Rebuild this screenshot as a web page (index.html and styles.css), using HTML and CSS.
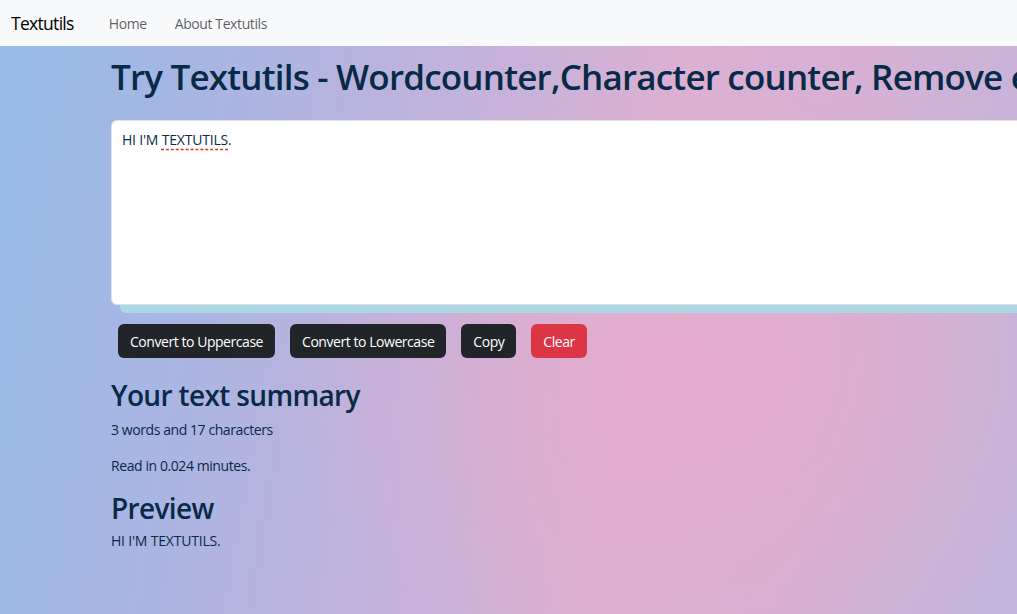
FILE: index.html
```html
<!DOCTYPE html>
<html lang="en">
<head>
<meta charset="utf-8">
<title>Textutils</title>
<link rel="stylesheet" href="styles.css">
</head>
<body>
<nav class="navbar">
  <span class="brand">Textutils</span>
  <a class="nav-link" href="#">Home</a>
  <a class="nav-link" href="#">About Textutils</a>
</nav>
<main class="container">
  <h1 class="title">Try Textutils - Wordcounter,Character counter, Remove extra spaces</h1>
  <div class="textbox">HI I'M <span class="misspelt">TEXTUTILS</span>.</div>
  <div class="actions">
    <button class="btn btn-dark">Convert to Uppercase</button>
    <button class="btn btn-dark">Convert to Lowercase</button>
    <button class="btn btn-dark">Copy</button>
    <button class="btn btn-red">Clear</button>
  </div>
  <h2 class="section">Your text summary</h2>
  <p class="line">3 words and 17 characters</p>
  <p class="line">Read in 0.024 minutes.</p>
  <h2 class="section preview-h">Preview</h2>
  <p class="line tight caps">HI I'M TEXTUTILS.</p>
</main>
</body>
</html>
```

FILE: styles.css
```css
html, body {
  margin: 0;
  padding: 0;
  overflow: hidden;
  height: 100%;
}
body {
  font-family: "Open Sans", "Noto Sans", sans-serif;
  font-size: 14px;
  letter-spacing: -0.42px;
  color: #082a47;
  background:
    radial-gradient(ellipse 420px 300px at 690px 370px, rgba(240, 168, 200, 0.55), rgba(240, 168, 200, 0) 100%),
    linear-gradient(100deg, #96bbe8 0%, #aab5e2 22%, #c5b2da 45%, #dbb0d2 62%, #d6b0d4 78%, #c1b5db 100%);
}
.navbar {
  height: 46px;
  background: #f8f9fa;
  display: flex;
  align-items: center;
  padding: 0 11px;
  box-sizing: border-box;
}
.brand {
  font-size: 17.5px;
  letter-spacing: -0.7px;
  color: #000;
  margin-right: 35px;
}
.nav-link {
  font-size: 14px;
  letter-spacing: -0.4px;
  color: rgba(0, 0, 0, 0.65);
  text-decoration: none;
  margin-right: 28px;
}
.container {
  width: 1100px;
  padding-left: 111px;
}
.title {
  font-size: 35px;
  font-weight: 600;
  letter-spacing: -0.8px;
  line-height: 42px;
  margin: 10px 0 22px;
  white-space: nowrap;
}
.textbox {
  height: 185px;
  background: #fff;
  border: 1px solid #dee2e6;
  border-radius: 6px;
  box-shadow: 9px 8px 0 #add8e6;
  padding: 9px 10px;
  box-sizing: border-box;
  font-size: 14px;
  letter-spacing: -0.2px;
  color: #082a47;
}
.misspelt {
  text-decoration: underline dashed #e03030;
  text-underline-offset: 4px;
}
.actions {
  display: flex;
  gap: 15px;
  margin: 19px 0 0 7px;
}
.btn {
  font-family: inherit;
  font-size: 14px;
  letter-spacing: -0.45px;
  color: #fff;
  border: none;
  border-radius: 6px;
  height: 34px;
  padding: 0 12px;
  cursor: pointer;
}
.btn-dark { background: #212529; }
.btn-red { background: #dc3545; }
.section {
  font-size: 28px;
  font-weight: 600;
  letter-spacing: -0.65px;
  line-height: 34px;
  margin: 20px 0 7px;
}
.line {
  margin: 0 0 14px;
  line-height: 22px;
}
.caps { letter-spacing: -0.2px; }
.preview-h { margin-top: 8px; margin-bottom: 5px; }
.tight { margin: 0; }
```
